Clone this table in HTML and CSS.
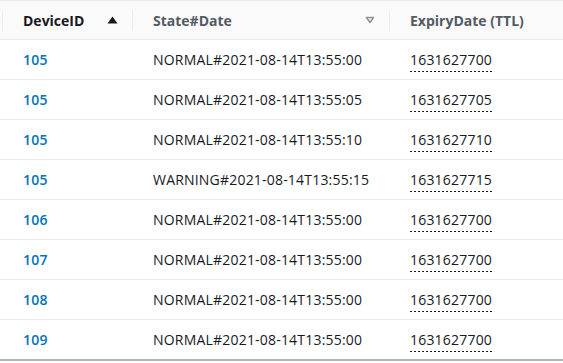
FILE: index.html
```html
<!DOCTYPE html>
<html lang="en">

<head>
    <meta charset="UTF-8" />
    <meta name="viewport" content="width=device-width, initial-scale=1.0" />
    <title>Items</title>
    <link rel="stylesheet" href="styles.css">
</head>

<body>
    <table class="items">
        <colgroup>
            <col class="col-edge">
            <col class="col-id">
            <col class="col-state">
            <col class="col-ttl">
        </colgroup>
        <thead>
            <tr>
                <th class="edge"></th>
                <th class="sorted">
                    <div class="head">DeviceID
                        <svg class="sort-icon" width="11" height="8" viewBox="0 0 11 8">
                            <path d="M0.5 7.5 L5.5 0.5 L10.5 7.5 Z" fill="#16191f" />
                        </svg>
                    </div>
                </th>
                <th>
                    <div class="head">State#Date
                        <svg class="sort-icon" width="10" height="8" viewBox="0 0 10 8">
                            <path d="M1.5 1.5 H8.5 L5 6.5 Z" fill="none" stroke="#879596" stroke-width="1.5" stroke-linejoin="round" />
                        </svg>
                    </div>
                </th>
                <th class="last">
                    <div class="head">ExpiryDate (TTL)</div>
                </th>
            </tr>
        </thead>
        <tbody>
            <tr><td></td><td><a href="#">105</a></td><td>NORMAL#2021-08-14T13:55:00</td><td><span class="ttl">1631627700</span></td></tr>
            <tr><td></td><td><a href="#">105</a></td><td>NORMAL#2021-08-14T13:55:05</td><td><span class="ttl">1631627705</span></td></tr>
            <tr><td></td><td><a href="#">105</a></td><td>NORMAL#2021-08-14T13:55:10</td><td><span class="ttl">1631627710</span></td></tr>
            <tr><td></td><td><a href="#">105</a></td><td>WARNING#2021-08-14T13:55:15</td><td><span class="ttl">1631627715</span></td></tr>
            <tr><td></td><td><a href="#">106</a></td><td>NORMAL#2021-08-14T13:55:00</td><td><span class="ttl">1631627700</span></td></tr>
            <tr><td></td><td><a href="#">107</a></td><td>NORMAL#2021-08-14T13:55:00</td><td><span class="ttl">1631627700</span></td></tr>
            <tr><td></td><td><a href="#">108</a></td><td>NORMAL#2021-08-14T13:55:00</td><td><span class="ttl">1631627700</span></td></tr>
            <tr><td></td><td><a href="#">109</a></td><td>NORMAL#2021-08-14T13:55:00</td><td><span class="ttl">1631627700</span></td></tr>
        </tbody>
    </table>
</body>

</html>
```

FILE: styles.css
```css
body {
    margin: 0;
    font-family: 'Open Sans', 'Noto Sans', sans-serif;
    font-size: 14px;
    color: #16191f;
    background: #ffffff;
}

.items {
    width: 563px;
    border-collapse: collapse;
    table-layout: fixed;
    border-bottom: 2px solid #aab7b8;
}

.col-edge {
    width: 3px;
}

.col-id {
    width: 130px;
}

.col-state {
    width: 257px;
}

.items thead tr {
    background: #fafafa;
    border-top: 1px solid #eaeded;
    border-bottom: 1px solid #eaeded;
}

.items th {
    height: 38px;
    padding: 0;
    text-align: left;
    font-weight: 700;
    color: #545b64;
    position: relative;
}

.items th::after {
    content: "";
    position: absolute;
    right: 0;
    top: 10px;
    height: 20px;
    width: 1px;
    background: #eaeded;
}

.items th.last::after {
    display: none;
}

.items th.sorted {
    color: #16191f;
}

.head {
    display: flex;
    align-items: center;
    justify-content: space-between;
    padding: 0 15px 0 20px;
}

.sort-icon {
    display: block;
}

.items td {
    height: 39px;
    padding: 0 0 0 20px;
    border-bottom: 1px solid #eaeded;
    white-space: nowrap;
    letter-spacing: 0.2px;
}

.items td:first-child {
    padding: 0;
}

.items tbody tr:last-child td {
    border-bottom: none;
}

.items a {
    color: #0073bb;
    font-weight: 600;
    text-decoration: none;
    letter-spacing: 0.3px;
}

.ttl {
    padding-bottom: 3px;
    background-image: linear-gradient(to right, #16191f 50%, transparent 50%);
    background-size: 4px 1px;
    background-repeat: repeat-x;
    background-position: left bottom;
}
```
